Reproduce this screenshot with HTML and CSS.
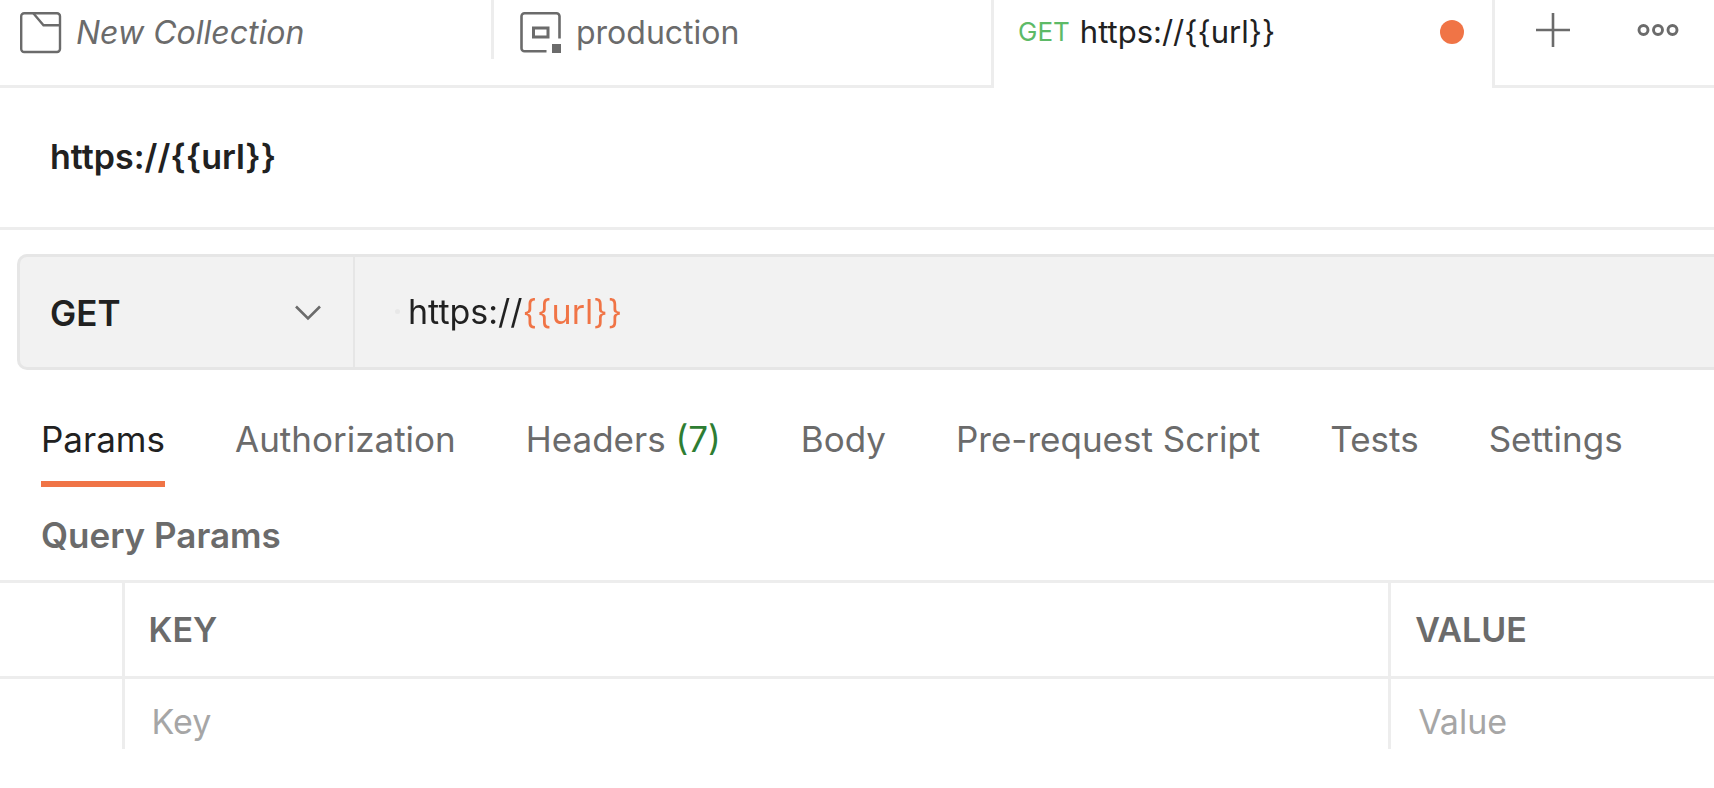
FILE: index.html
```html
<!DOCTYPE html>
<html lang="en">
<head>
<meta charset="utf-8">
<meta name="viewport" content="width=device-width, initial-scale=1">
<title>https://{{url}}</title>
<link rel="stylesheet" href="styles.css">
</head>
<body>
<header class="tabbar">
  <button class="doc-tab doc-tab-preview" type="button">
    <svg class="tab-icon" viewBox="0 0 42 42" fill="none" stroke="currentColor" stroke-width="2.4" aria-hidden="true"><rect x="1.2" y="1.2" width="38.8" height="38.8" rx="3"/><path d="M13.500 1.500L23.500 13.200H40"/></svg>
    <span>New Collection</span>
  </button>
  <button class="doc-tab doc-tab-env" type="button">
    <svg class="tab-icon" viewBox="0 0 42 42" fill="none" stroke="currentColor" stroke-width="2.6" aria-hidden="true"><path d="M39.500 26.500V4.300a3 3 0 0 0-3-3H4.500a3 3 0 0 0-3 3v32a3 3 0 0 0 3 3H26.500"/><rect x="13.500" y="16" width="14.500" height="9" stroke-width="3"/><rect x="32" y="32" width="9" height="9" fill="currentColor" stroke="none"/></svg>
    <span>production</span>
  </button>
  <button class="doc-tab doc-tab-active" type="button">
    <span class="verb">GET</span>
    <span>https://{{url}}</span>
    <span class="unsaved"></span>
  </button>
  <div class="tab-actions">
    <button class="icon-button" type="button" aria-label="New tab"><svg width="36" height="36" viewBox="0 0 36 36" fill="none" stroke="currentColor" stroke-width="2.6" aria-hidden="true"><path d="M18 1v34M1 18h34"/></svg></button>
    <button class="icon-button" type="button" aria-label="More"><svg width="42" height="36" viewBox="0 0 42 36" fill="none" stroke="currentColor" stroke-width="2.9" aria-hidden="true"><circle cx="6.500" cy="18" r="4.500"/><circle cx="21" cy="18" r="4.500"/><circle cx="35.500" cy="18" r="4.500"/></svg></button>
  </div>
</header>
<main>
  <h1 class="request-name">https://{{url}}</h1>
  <form class="request-line">
    <div class="method">
      <select class="method-select" aria-label="Method"><option>GET</option><option>POST</option><option>PUT</option><option>DELETE</option></select>
      <svg class="chevron" width="26" height="16" viewBox="0 0 26 16" fill="none" stroke="currentColor" stroke-width="2.6" aria-hidden="true"><path d="M1 1.500l12 12 12-12"/></svg>
    </div>
    <div class="address">
      <span class="speck"></span>
      <input class="address-input" type="text" aria-label="Request URL" value="https://{{url}}" spellcheck="false">
    </div>
  </form>
  <nav class="sections">
    <button class="section-tab section-tab-active" type="button">Params</button>
    <button class="section-tab" type="button">Authorization</button>
    <button class="section-tab section-tab-counted" type="button">Headers <span class="count">(7)</span></button>
    <button class="section-tab" type="button">Body</button>
    <button class="section-tab" type="button">Pre-request Script</button>
    <button class="section-tab" type="button">Tests</button>
    <button class="section-tab" type="button">Settings</button>
  </nav>
  <h2 class="params-title">Query Params</h2>
  <table class="params">
    <colgroup><col class="col-check"><col class="col-key"><col></colgroup>
    <thead><tr><td></td><th scope="col">KEY</th><th scope="col">VALUE</th></tr></thead>
    <tbody><tr><td></td><td><input class="cell-input" type="text" placeholder="Key" aria-label="Key"></td><td><input class="cell-input" type="text" placeholder="Value" aria-label="Value"></td></tr></tbody>
  </table>
</main>
</body>
</html>
```
FILE: styles.css
```css
* { box-sizing: border-box; }

:root {
  --line: #ededed;
  --muted: #6b6b6b;
  --ink: #212121;
  --orange: #f07446;
}

body {
  margin: 0;
  background: #fff;
  color: var(--ink);
  font-family: Inter, "Liberation Sans", sans-serif;
  font-optical-sizing: none;
  font-size: 34px;
  line-height: 40px;
  overflow-x: hidden;
}

button, input, select {
  margin: 0;
  padding: 0;
  border: 0;
  border-radius: 0;
  background: none;
  color: inherit;
  font: inherit;
  font-optical-sizing: none;
}

.tabbar {
  display: grid;
  grid-template-columns: 494fr 500fr 501fr 219fr;
  height: 88px;
}

.doc-tab {
  position: relative;
  display: flex;
  align-items: center;
  gap: 14px;
  padding: 0 20px 20px;
  border-bottom: 3px solid var(--line);
  color: var(--muted);
  font-size: 32px;
  white-space: nowrap;
}

.doc-tab-preview { font-style: italic; }

.doc-tab-preview::after {
  content: "";
  position: absolute;
  top: 0;
  right: 0;
  width: 3px;
  height: 59px;
  background: var(--line);
}

.doc-tab-env,
.doc-tab-active { border-right: 3px solid var(--line); }

.doc-tab-env { padding-left: 26px; }

.doc-tab-active {
  gap: 10px;
  padding: 0 28px 24px 24px;
  border-bottom: 0;
  color: var(--ink);
  font-size: 31px;
}

.tab-icon { flex: none; width: 42px; height: 42px; }

.verb { color: #5dba67; font-size: 26px; }

.unsaved {
  width: 24px;
  height: 24px;
  margin-left: auto;
  border-radius: 50%;
  background: var(--orange);
}

.tab-actions {
  display: flex;
  align-items: center;
  justify-content: space-between;
  padding: 0 35px 26px 40px;
  border-bottom: 3px solid var(--line);
  color: var(--muted);
}

.icon-button { display: flex; }

.request-name {
  margin: 0;
  padding: 49px 50px 50px;
  border-bottom: 3px solid var(--line);
  font-size: 34px;
  font-weight: 600;
  line-height: 40px;
}

.request-line {
  display: flex;
  margin: 24px 0 0 17px;
  border: 3px solid #e6e6e6;
  border-right: 0;
  border-radius: 10px 0 0 10px;
  background: #f2f2f2;
}

.method {
  position: relative;
  flex: 0 0 335px;
  border-right: 2px solid #e6e6e6;
}

.method-select {
  appearance: none;
  width: 100%;
  height: 110px;
  padding: 4px 30px 2px;
  font-size: 35px;
  font-weight: 600;
}

.chevron {
  position: absolute;
  top: 48px;
  right: 32px;
  color: var(--muted);
  pointer-events: none;
}

.address {
  display: flex;
  flex: 1;
  align-items: center;
  gap: 8px;
  padding: 0 0 2px 40px;
}

.speck {
  width: 5px;
  height: 5px;
  border-radius: 50%;
  background: #e8e8e8;
}

.address-input {
  flex: 1;
  height: 60px;
  background: linear-gradient(90deg, var(--ink) 116px, var(--orange) 116px);
  background-clip: text;
  -webkit-text-fill-color: transparent;
}

.sections {
  display: flex;
  gap: 70px;
  margin-top: 49px;
  padding-left: 41px;
  font-size: 35px;
}

.section-tab {
  padding-bottom: 22px;
  border-bottom: 6px solid transparent;
  color: var(--muted);
  white-space: nowrap;
}

.section-tab-active { border-color: var(--orange); color: var(--ink); }

.section-tab-counted { padding-right: 10px; }

.count { color: #2e7d32; }

.params-title {
  margin: 0;
  padding: 28px 41px 25px;
  color: var(--muted);
  font-size: 35px;
  font-weight: 600;
  line-height: 40px;
}

.params {
  width: 100%;
  border-collapse: collapse;
  table-layout: fixed;
  color: var(--muted);
}

.col-check { width: 123px; }
.col-key { width: 73.9%; }

.params th,
.params td { padding: 0; border-left: 3px solid var(--line); }

.params td:first-child { border-left: 0; }

.params thead { border-top: 3px solid var(--line); border-bottom: 3px solid var(--line); }

.params th {
  height: 96px;
  padding-left: 24px;
  font-weight: 600;
  text-align: left;
}

.params tbody td { height: 70px; padding-left: 27px; }

.cell-input { display: block; width: 100%; height: 56px; margin-top: 14px; }

.cell-input::placeholder { color: #a6a6a6; opacity: 1; }
```
